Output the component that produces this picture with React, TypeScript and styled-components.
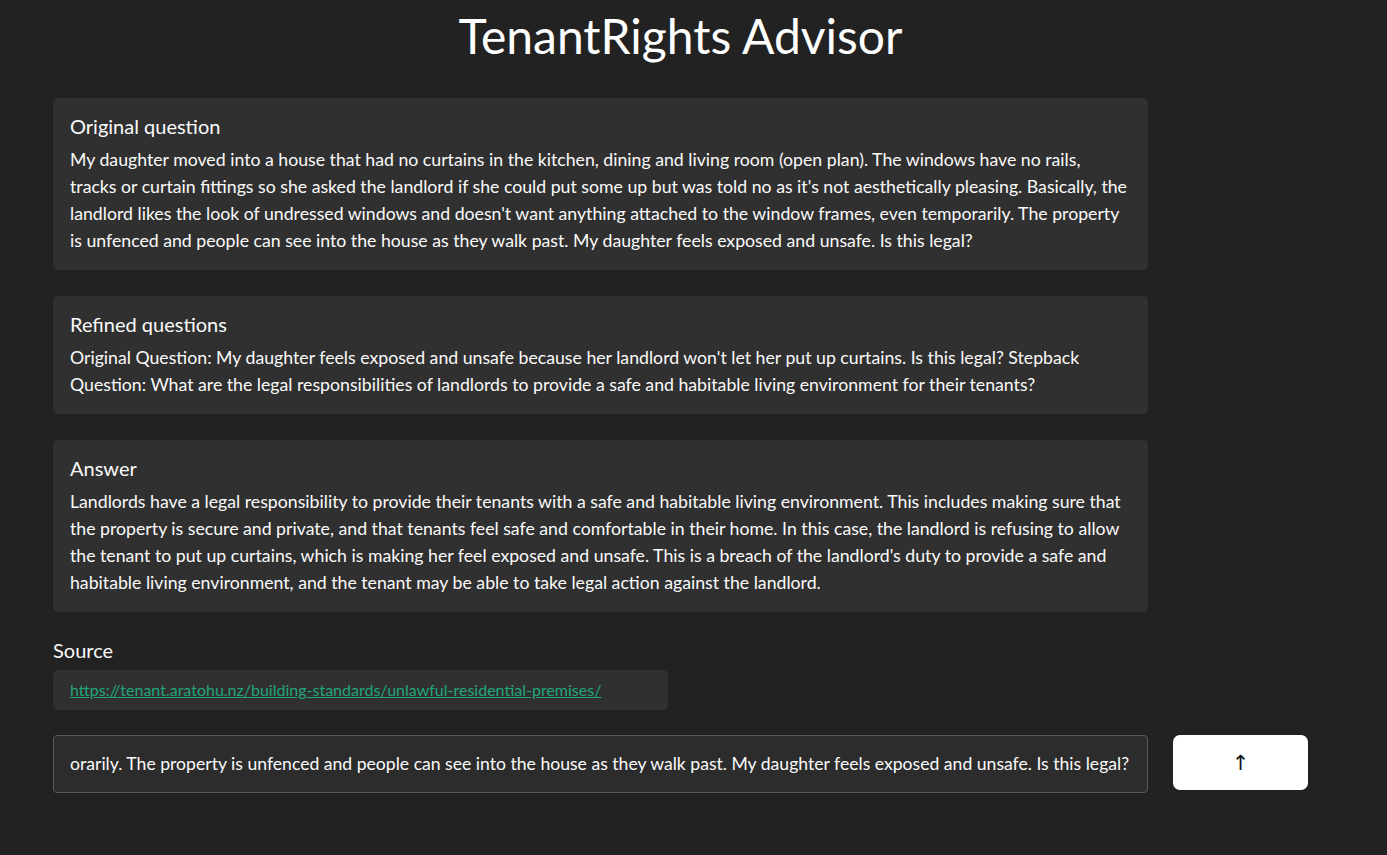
import React from "react";
import styled, { createGlobalStyle } from "styled-components";

const GlobalStyle = createGlobalStyle`
  html, body {
    margin: 0;
    padding: 0;
    background: #222222;
    color: #fafafa;
    font-family: Lato, "Noto Sans", sans-serif;
  }
  * { box-sizing: border-box; }
`;

const Page = styled.main`
  display: grid;
  grid-template-columns: 1095px 135px;
  column-gap: 25px;
  width: 1255px;
  margin-left: 53px;
  padding: 7px 0 40px;
`;

const Title = styled.h1`
  grid-column: 1 / -1;
  margin: 0 0 33px;
  text-align: center;
  font-size: 48px;
  font-weight: 400;
  line-height: 57.6px;
  color: #ffffff;
`;

const Card = styled.section`
  grid-column: 1;
  background: #303030;
  border-radius: 5px;
  padding: 15px 17px 16px;
  margin-bottom: 26px;
`;

const CardHeading = styled.h2`
  margin: 0 0 6px;
  font-size: 20px;
  font-weight: 400;
  line-height: 27px;
  color: #fafafa;
`;

const CardBody = styled.p`
  margin: 0;
  font-size: 17.7px;
  line-height: 27px;
  color: #fafafa;
`;

const SourceLabel = styled.h3`
  grid-column: 1;
  margin: 0 0 8px;
  font-size: 20px;
  font-weight: 400;
  line-height: 24px;
  color: #fafafa;
`;

const SourceBox = styled.div`
  grid-column: 1;
  width: 615px;
  height: 40px;
  display: flex;
  align-items: center;
  padding: 0 17px;
  background: #303030;
  border-radius: 5px;
  margin-bottom: 25px;
`;

const SourceLink = styled.a`
  font-size: 16px;
  color: #21a67a;
  text-decoration: underline;
`;

const QueryInput = styled.input`
  grid-column: 1;
  height: 58px;
  width: 100%;
  padding: 0 6px 0 16px;
  background: #2c2c2c;
  border: 1px solid #575757;
  border-radius: 4px;
  color: #fafafa;
  font-family: Lato, "Noto Sans", sans-serif;
  font-size: 17.6px;
  outline: none;
`;

const SendButton = styled.button`
  grid-column: 2;
  height: 55px;
  width: 135px;
  padding-top: 3px;
  background: #ffffff;
  border: none;
  border-radius: 7px;
  color: #111111;
  font-family: "DejaVu Sans", sans-serif;
  font-size: 21px;
  cursor: pointer;
`;

const cards = [
  {
    title: "Original question",
    body:
      "My daughter moved into a house that had no curtains in the kitchen, dining and living room (open plan). The windows have no rails, tracks or curtain fittings so she asked the landlord if she could put some up but was told no as it's not aesthetically pleasing. Basically, the landlord likes the look of undressed windows and doesn't want anything attached to the window frames, even temporarily. The property is unfenced and people can see into the house as they walk past. My daughter feels exposed and unsafe. Is this legal?",
  },
  {
    title: "Refined questions",
    body:
      "Original Question: My daughter feels exposed and unsafe because her landlord won't let her put up curtains. Is this legal? Stepback Question: What are the legal responsibilities of landlords to provide a safe and habitable living environment for their tenants?",
  },
  {
    title: "Answer",
    body:
      "Landlords have a legal responsibility to provide their tenants with a safe and habitable living environment. This includes making sure that the property is secure and private, and that tenants feel safe and comfortable in their home. In this case, the landlord is refusing to allow the tenant to put up curtains, which is making her feel exposed and unsafe. This is a breach of the landlord's duty to provide a safe and habitable living environment, and the tenant may be able to take legal action against the landlord.",
  },
];

const url = "https://tenant.aratohu.nz/building-standards/unlawful-residential-premises/";

export default function App() {
  return (
    <>
      <GlobalStyle />
      <Page>
        <Title>TenantRights Advisor</Title>
        {cards.map((c) => (
          <Card key={c.title}>
            <CardHeading>{c.title}</CardHeading>
            <CardBody>{c.body}</CardBody>
          </Card>
        ))}
        <SourceLabel>Source</SourceLabel>
        <SourceBox>
          <SourceLink href={url}>{url}</SourceLink>
        </SourceBox>
        <QueryInput
          type="text"
          defaultValue="orarily. The property is unfenced and people can see into the house as they walk past. My daughter feels exposed and unsafe. Is this legal?"
        />
        <SendButton type="button">↑</SendButton>
      </Page>
    </>
  );
}
